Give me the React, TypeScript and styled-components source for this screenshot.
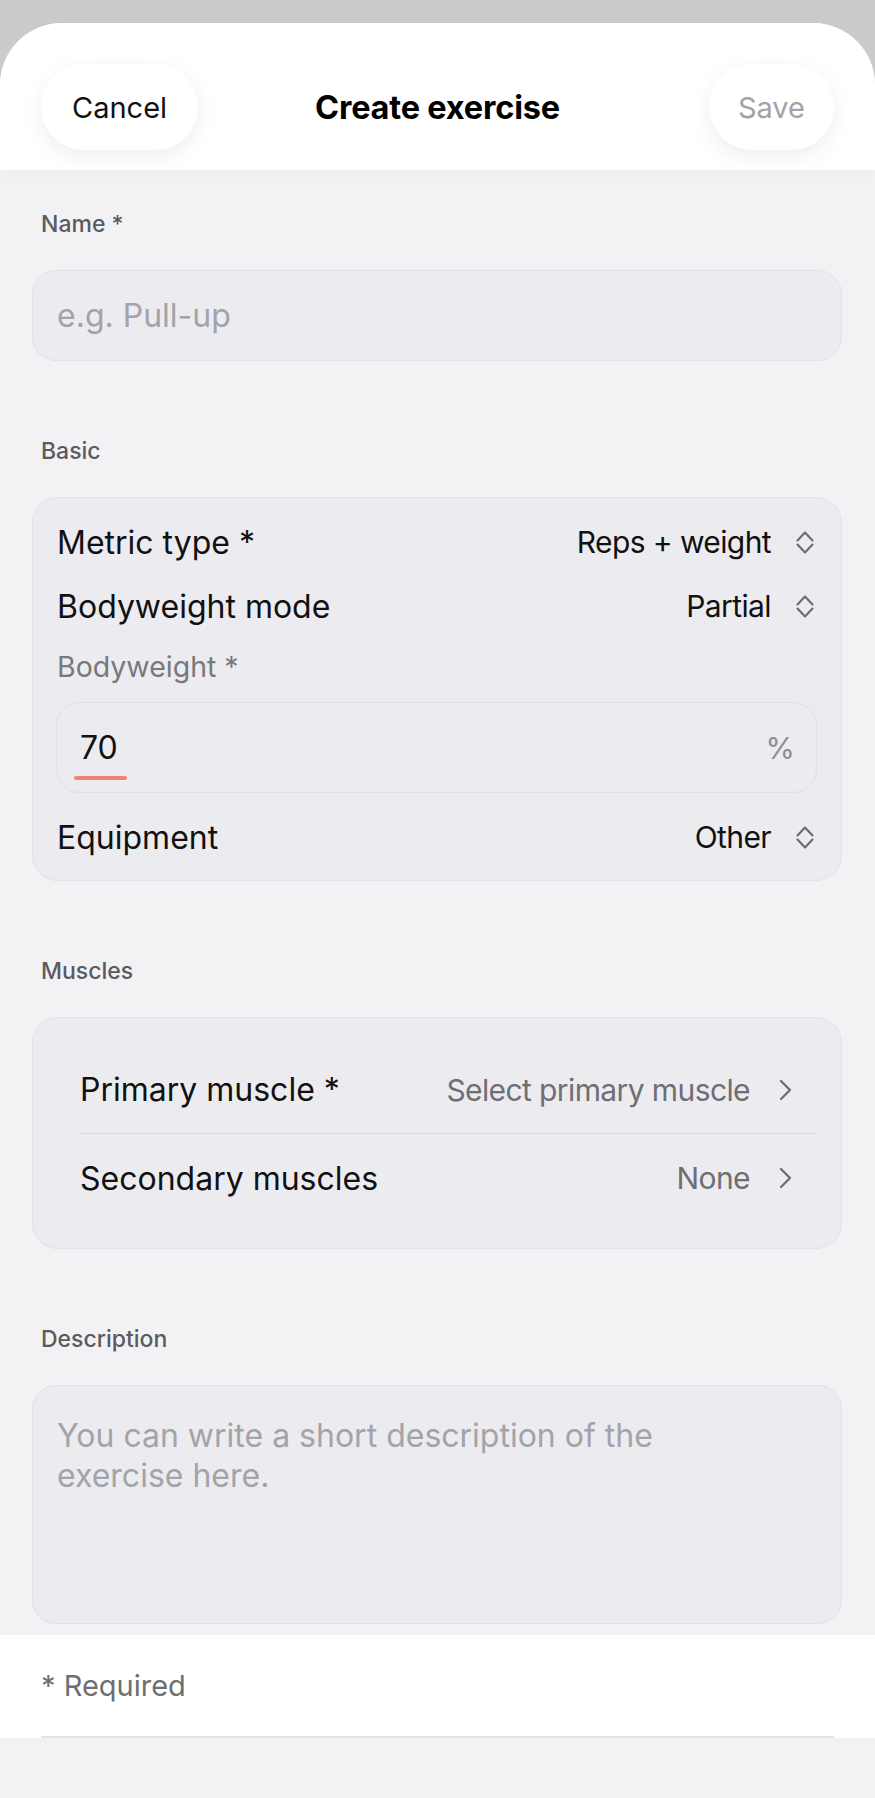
import React from "react";
import styled, { createGlobalStyle } from "styled-components";

const GlobalStyle = createGlobalStyle`
  html, body {
    margin: 0;
    padding: 0;
    background: #cbcbcb;
  }
  body {
    font-family: Inter, "Noto Sans", "Liberation Sans", sans-serif;
    -webkit-font-smoothing: antialiased;
  }
  * {
    box-sizing: border-box;
  }
`;

const Sheet = styled.div`
  margin-top: 23px;
  min-height: calc(100vh - 23px);
  background: #f2f2f4;
  border-radius: 62px 62px 0 0;
  overflow: hidden;
  display: flex;
  flex-direction: column;
`;

const Header = styled.header`
  display: grid;
  grid-template-columns: 1fr auto 1fr;
  align-items: center;
  height: 147px;
  padding: 41px 41px 20px 41px;
  background: #fff;
  box-shadow: 0 4px 14px rgba(0, 0, 0, 0.025);
  position: relative;
  z-index: 1;
`;

const PillButton = styled.button<{ $side: "start" | "end"; $muted?: boolean }>`
  justify-self: ${(p) => p.$side};
  height: 86px;
  padding: 0 ${(p) => (p.$muted ? "29px" : "31px")};
  border: none;
  border-radius: 43px;
  background: #fff;
  box-shadow: 0 6px 22px rgba(0, 0, 0, 0.07);
  font-family: inherit;
  font-size: 29px;
  color: ${(p) => (p.$muted ? "#a3a3a7" : "#111")};
  cursor: pointer;
`;

const Title = styled.h1`
  margin: 0;
  font-size: 32.5px;
  font-weight: 650;
  color: #000;
  letter-spacing: -0.2px;
`;

const Content = styled.main`
  display: flex;
  flex-direction: column;
  gap: 76px;
  padding: 40px 33px 0 32px;
`;

const Section = styled.section`
  display: flex;
  flex-direction: column;
  gap: 32px;
`;

const SectionLabel = styled.div`
  padding-left: 9px;
  font-size: 23px;
  line-height: 28px;
  font-weight: 500;
  color: #5a5a5f;
`;

const Field = styled.div<{ $height: number }>`
  height: ${(p) => p.$height}px;
  display: flex;
  align-items: center;
  padding: 0 24px;
  background: #ececf0;
  border: 1px solid #e2e2e6;
  border-radius: 24px;
  font-size: 32px;
  color: #a3a3a8;
`;

const Card = styled.div<{ $pad: string }>`
  display: flex;
  flex-direction: column;
  padding: ${(p) => p.$pad};
  background: #ececf0;
  border: 1px solid #e2e2e6;
  border-radius: 26px;
`;

const Row = styled.div<{ $height: number; $divider?: boolean }>`
  display: flex;
  align-items: center;
  justify-content: space-between;
  height: ${(p) => p.$height}px;
  border-bottom: ${(p) => (p.$divider ? "1.5px solid #d9d9de" : "none")};
`;

const RowLabel = styled.span`
  font-size: 32px;
  color: #111;
`;

const RowValue = styled.span<{ $muted?: boolean }>`
  display: flex;
  align-items: center;
  gap: ${(p) => (p.$muted ? "29px" : "25px")};
  padding-right: ${(p) => (p.$muted ? "25px" : "3px")};
  font-size: 30px;
  letter-spacing: -0.6px;
  color: ${(p) => (p.$muted ? "#6e6e73" : "#111")};
`;

const SubLabel = styled.div`
  padding-top: 12px;
  font-size: 28.5px;
  line-height: 34px;
  color: #78787d;
`;

const NumberField = styled.div`
  display: flex;
  align-items: center;
  justify-content: space-between;
  height: 91px;
  margin: 18px 0 12px -1px;
  padding: 0 21px 0 23px;
  background: #ececf0;
  border: 1px solid #e0e0e4;
  border-radius: 24px;
  font-size: 32px;
`;

const NumberValue = styled.span`
  position: relative;
  line-height: 40px;
  color: #111;
  &::after {
    content: "";
    position: absolute;
    left: -6px;
    right: -9px;
    bottom: -12px;
    height: 3.5px;
    border-radius: 2px;
    background: #f08373;
  }
`;

const Unit = styled.span`
  font-size: 30px;
  color: #8e8e93;
`;

const MuscleList = styled.div`
  display: flex;
  flex-direction: column;
  padding: 28px 24px 26px 47px;
`;

const DescriptionBox = styled.div`
  height: 239px;
  padding: 30px 24px;
  background: #ececf0;
  border: 1px solid #e2e2e6;
  border-radius: 24px;
  font-size: 32px;
  line-height: 40px;
  color: #a3a3a8;
`;

const Placeholder = styled.p`
  margin: 0;
  max-width: 620px;
`;

const Footer = styled.footer`
  margin-top: 11px;
  padding: 0 41px;
  background: #fff;
`;

const FooterInner = styled.div`
  display: flex;
  align-items: center;
  height: 103px;
  border-bottom: 2px solid #e3e3e6;
  font-size: 29px;
  color: #6e6e73;
`;

const UpDownIcon = () => (
  <svg width="18" height="25" viewBox="0 0 18 25" fill="none">
    <path
      d="M1.5 10.5 L9 2.5 L16.5 10.5 M1.5 14.5 L9 22.5 L16.5 14.5"
      stroke="#6b6b70"
      strokeWidth="2.1"
      strokeLinecap="round"
      strokeLinejoin="round"
    />
  </svg>
);

const ChevronRight = () => (
  <svg width="13" height="22" viewBox="0 0 13 22" fill="none">
    <path
      d="M2 2 L11 11 L2 20"
      stroke="#6b6b70"
      strokeWidth="2.2"
      strokeLinecap="round"
      strokeLinejoin="round"
    />
  </svg>
);

const App = () => {
  return (
    <>
      <GlobalStyle />
      <Sheet>
        <Header>
          <PillButton $side="start">Cancel</PillButton>
          <Title>Create exercise</Title>
          <PillButton $side="end" $muted>
            Save
          </PillButton>
        </Header>

        <Content>
          <Section>
            <SectionLabel>Name *</SectionLabel>
            <Field $height={91}>e.g. Pull-up</Field>
          </Section>

          <Section>
            <SectionLabel>Basic</SectionLabel>
            <Card $pad="12px 24px 11px 24px">
              <Row $height={64}>
                <RowLabel>Metric type *</RowLabel>
                <RowValue>
                  Reps + weight
                  <UpDownIcon />
                </RowValue>
              </Row>
              <Row $height={64}>
                <RowLabel>Bodyweight mode</RowLabel>
                <RowValue>
                  Partial
                  <UpDownIcon />
                </RowValue>
              </Row>
              <SubLabel>Bodyweight *</SubLabel>
              <NumberField>
                <NumberValue>70</NumberValue>
                <Unit>%</Unit>
              </NumberField>
              <Row $height={64}>
                <RowLabel>Equipment</RowLabel>
                <RowValue>
                  Other
                  <UpDownIcon />
                </RowValue>
              </Row>
            </Card>
          </Section>

          <Section>
            <SectionLabel>Muscles</SectionLabel>
            <Card $pad="0">
              <MuscleList>
                <Row $height={88} $divider>
                  <RowLabel>Primary muscle *</RowLabel>
                  <RowValue $muted>
                    Select primary muscle
                    <ChevronRight />
                  </RowValue>
                </Row>
                <Row $height={88}>
                  <RowLabel>Secondary muscles</RowLabel>
                  <RowValue $muted>
                    None
                    <ChevronRight />
                  </RowValue>
                </Row>
              </MuscleList>
            </Card>
          </Section>

          <Section>
            <SectionLabel>Description</SectionLabel>
            <DescriptionBox>
              <Placeholder>
                You can write a short description of the exercise here.
              </Placeholder>
            </DescriptionBox>
          </Section>
        </Content>

        <Footer>
          <FooterInner>* Required</FooterInner>
        </Footer>
      </Sheet>
    </>
  );
};

export default App;
